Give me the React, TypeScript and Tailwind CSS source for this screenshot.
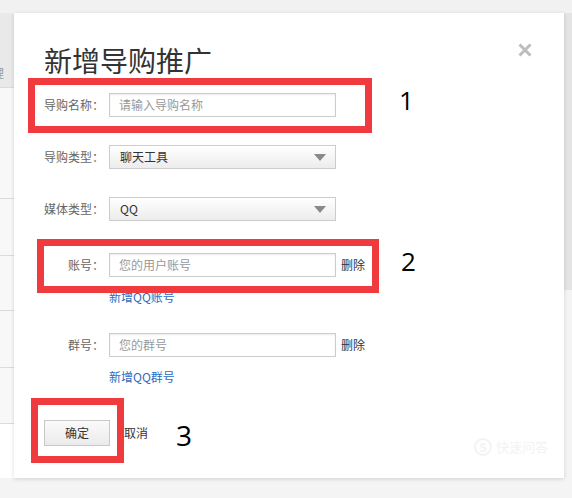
import React from "react";

const font = "font-['Noto_Sans_CJK_SC','Noto_Sans',sans-serif]";

const Label = ({ text }: { text: string }) => (
  <span className="w-[65px] shrink-0 whitespace-nowrap pr-[5px] text-right text-[12px] text-[#666]">
    {text}
  </span>
);

const Input = ({ placeholder }: { placeholder: string }) => (
  <div className="flex h-[24px] w-[227px] items-center border border-[#ccc] bg-white pl-[9px] text-[12px] text-[#999] shadow-[inset_0_1px_2px_rgba(0,0,0,0.08)]">
    {placeholder}
  </div>
);

const Select = ({ value }: { value: string }) => (
  <div className="flex h-[24px] w-[227px] items-center justify-between border border-[#ccc] bg-gradient-to-b from-white to-[#ececec] pl-[10px] pr-[9px] text-[12px] text-[#333]">
    <span>{value}</span>
    <svg width="12" height="7" viewBox="0 0 12 7">
      <path d="M0 0 L12 0 L6 7 Z" fill="#8a8a8a" />
    </svg>
  </div>
);

const Row = ({ label, children, className = "" }: { label: string; children: React.ReactNode; className?: string }) => (
  <div className={`flex h-[24px] items-center ${className}`}>
    <Label text={label} />
    {children}
  </div>
);

const App = () => {
  return (
    <div className={`${font} flex h-[498px] w-[572px] flex-col bg-[#f3f3f3]`}>
      <div className="h-[13px] shrink-0 bg-[#f1f1f1]" />
      <div className="flex">
        {/* page behind the dialog */}
        <div className="flex w-[14px] shrink-0 flex-col">
          <div className="flex h-[74px] items-end overflow-hidden bg-[#e9e9e9] pb-[8px] text-[12px] leading-none text-[#999]">
            <span className="-ml-[8px]">理</span>
          </div>
          <div className="h-[111px] border-t border-[#dcdcdc] bg-[#f8f8f8]" />
          <div className="h-[57px] border-t border-[#dcdcdc] bg-[#f8f8f8]" />
          <div className="h-[55px] border-t border-[#dcdcdc] bg-[#f8f8f8]" />
          <div className="h-[57px] border-t border-[#dcdcdc] bg-[#f8f8f8]" />
          <div className="h-[56px] border-t border-[#dcdcdc] bg-[#f8f8f8]" />
          <div className="h-[55px] border-t border-[#dcdcdc] bg-white" />
        </div>

        {/* dialog */}
        <div className="relative flex h-[465px] w-[550px] shrink-0 flex-col bg-white pl-[30px] shadow-[0_1px_4px_rgba(0,0,0,0.15)]">
          <h2 className="mt-[31px] h-[32px] text-[28px] leading-[32px] font-normal text-[#333]">
            新增导购推广
          </h2>
          <svg className="absolute left-[504px] top-[30px]" width="14" height="14" viewBox="0 0 14 14">
            <path d="M1.5 1.5 L12.5 12.5 M12.5 1.5 L1.5 12.5" stroke="#bdbdbd" strokeWidth="3" />
          </svg>

          <Row label="导购名称：" className="mt-[17px]">
            <Input placeholder="请输入导购名称" />
          </Row>
          <Row label="导购类型：" className="mt-[28px]">
            <Select value="聊天工具" />
          </Row>
          <Row label="媒体类型：" className="mt-[28px]">
            <Select value="QQ" />
          </Row>
          <Row label="账号：" className="mt-[32px]">
            <Input placeholder="您的用户账号" />
            <span className="ml-[5px] text-[12px] text-[#333]">删除</span>
          </Row>
          <a className="ml-[65px] mt-[12px] h-[16px] text-[12px] leading-[16px] text-[#2d6bc0]">新增QQ账号</a>
          <Row label="群号：" className="mt-[28px]">
            <Input placeholder="您的群号" />
            <span className="ml-[5px] text-[12px] text-[#333]">删除</span>
          </Row>
          <a className="ml-[65px] mt-[12px] h-[16px] text-[12px] leading-[16px] text-[#2d6bc0]">新增QQ群号</a>

          <div className="mt-[35px] flex items-center">
            <button className="h-[26px] w-[66px] border border-[#c8c8c8] bg-gradient-to-b from-[#fafafa] to-[#ebebeb] text-[12px] text-[#333]">
              确定
            </button>
            <span className="ml-[14px] text-[12px] text-[#333]">取消</span>
          </div>

          {/* annotations */}
          <div className="absolute left-[14px] top-[65px] h-[55px] w-[344px] border-[7px] border-[#ef3a3e]" />
          <span className="absolute left-[385px] top-[74px] font-['Open_Sans',sans-serif] text-[26px] leading-none text-black">1</span>
          <div className="absolute left-[23px] top-[226px] h-[54px] w-[342px] border-[7px] border-[#ef3a3e]" />
          <span className="absolute left-[387px] top-[235px] font-['Open_Sans',sans-serif] text-[26px] leading-none text-black">2</span>
          <div className="absolute left-[17px] top-[385px] h-[65px] w-[93px] border-[7px] border-[#ef3a3e]" />
          <span className="absolute left-[162px] top-[408px] font-['Open_Sans',sans-serif] text-[28px] leading-none text-black">3</span>

          {/* faint watermark */}
          <div className="absolute left-[460px] top-[424px] flex items-center gap-[4px] text-[#f3f3f3]">
            <span className="flex h-[18px] w-[18px] items-center justify-center rounded-full border-2 border-[#f3f3f3] text-[12px] font-bold">S</span>
            <span className="text-[13px]">快速问答</span>
          </div>
        </div>

        <div className="flex w-[8px] shrink-0 flex-col">
          <div className="h-[277px] bg-[#e4e4e4]" />
          <div className="flex-1 bg-[#f4f4f4]" />
        </div>
      </div>
      <div className="flex-1 bg-[#f4f4f4]" />
    </div>
  );
};

export default App;
